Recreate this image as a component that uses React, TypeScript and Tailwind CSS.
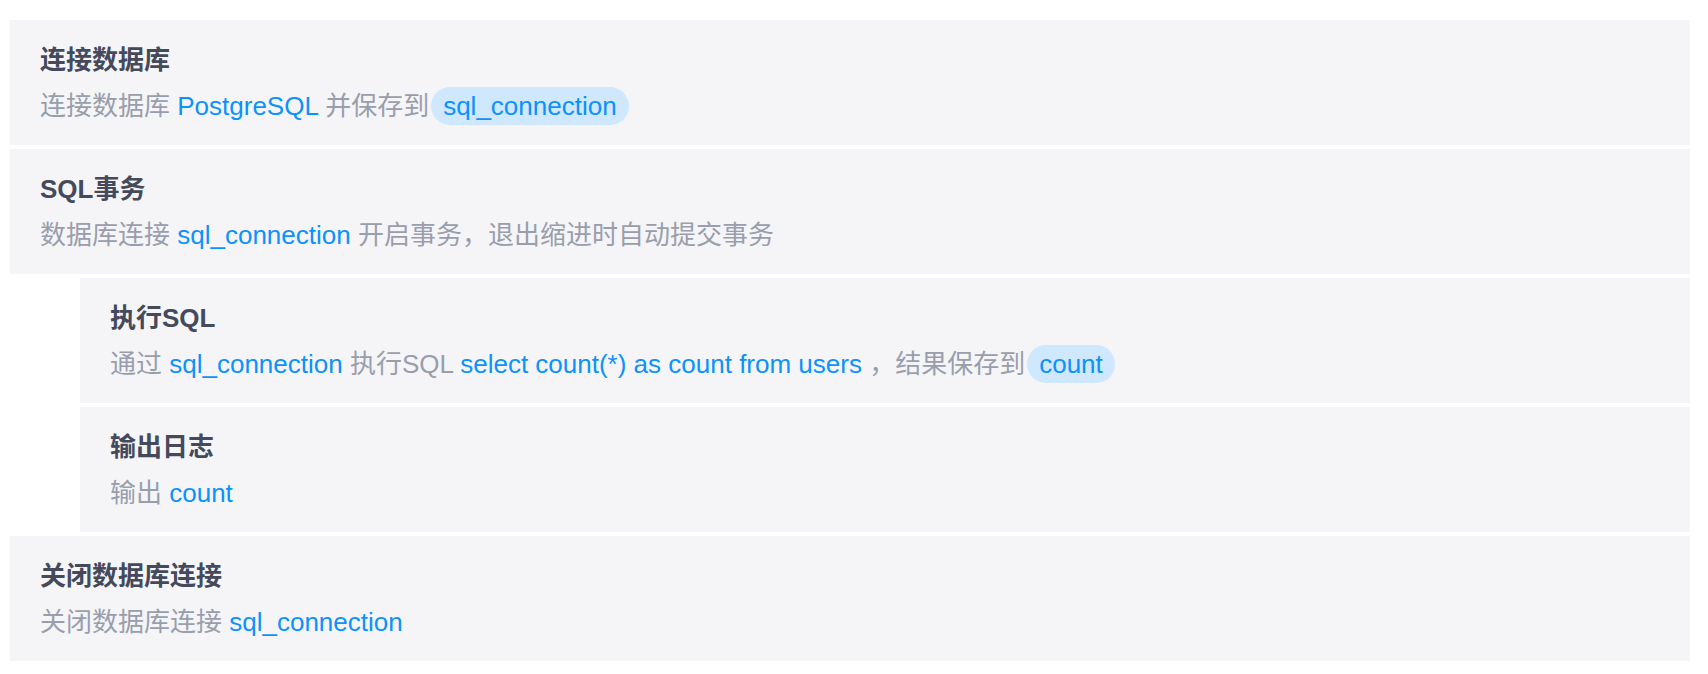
import React from "react";

type Part = { t: string; kind?: "blue" | "pill" };

const Blue = ({ children }: { children: React.ReactNode }) => (
  <span className="text-[#0c92fc]">{children}</span>
);

const Pill = ({ children }: { children: React.ReactNode }) => (
  <span className="inline-block align-baseline rounded-full bg-[#cfe8fd] text-[#0c92fc] px-[12px] leading-[38px] ml-[2px]">
    {children}
  </span>
);

function Step({
  title,
  parts,
  indent = false,
}: {
  title: string;
  parts: Part[];
  indent?: boolean;
}) {
  return (
    <div className={indent ? "ml-[70px]" : ""}>
      <div className="bg-[#f5f5f8] h-[125px] pl-[30px] pr-[20px] pt-[20px]">
        <div className="text-[26px] leading-[40px] font-bold text-[#444a5b]">
          {title}
        </div>
        <div className="mt-[7px] text-[26px] leading-[38px] h-[38px] text-[#999eac] whitespace-nowrap">
          {parts.map((p, i) =>
            p.kind === "blue" ? (
              <Blue key={i}>{p.t}</Blue>
            ) : p.kind === "pill" ? (
              <Pill key={i}>{p.t}</Pill>
            ) : (
              <span key={i}>{p.t}</span>
            )
          )}
        </div>
      </div>
    </div>
  );
}

export default function App() {
  return (
    <div
      className="w-[1708px] h-[674px] bg-white pl-[10px] pr-[18px] pt-[20px] flex flex-col gap-[4px]"
      style={{ fontFamily: '"Liberation Sans", "Noto Sans CJK SC", sans-serif' }}
    >
      <Step
        title="连接数据库"
        parts={[
          { t: "连接数据库 " },
          { t: "PostgreSQL", kind: "blue" },
          { t: " 并保存到" },
          { t: "sql_connection", kind: "pill" },
        ]}
      />
      <Step
        title="SQL事务"
        parts={[
          { t: "数据库连接 " },
          { t: "sql_connection", kind: "blue" },
          { t: " 开启事务，退出缩进时自动提交事务" },
        ]}
      />
      <Step
        indent
        title="执行SQL"
        parts={[
          { t: "通过 " },
          { t: "sql_connection", kind: "blue" },
          { t: " 执行SQL " },
          { t: "select count(*) as count from users", kind: "blue" },
          { t: " ，结果保存到" },
          { t: "count", kind: "pill" },
        ]}
      />
      <Step
        indent
        title="输出日志"
        parts={[{ t: "输出 " }, { t: "count", kind: "blue" }]}
      />
      <Step
        title="关闭数据库连接"
        parts={[
          { t: "关闭数据库连接 " },
          { t: "sql_connection", kind: "blue" },
        ]}
      />
    </div>
  );
}
